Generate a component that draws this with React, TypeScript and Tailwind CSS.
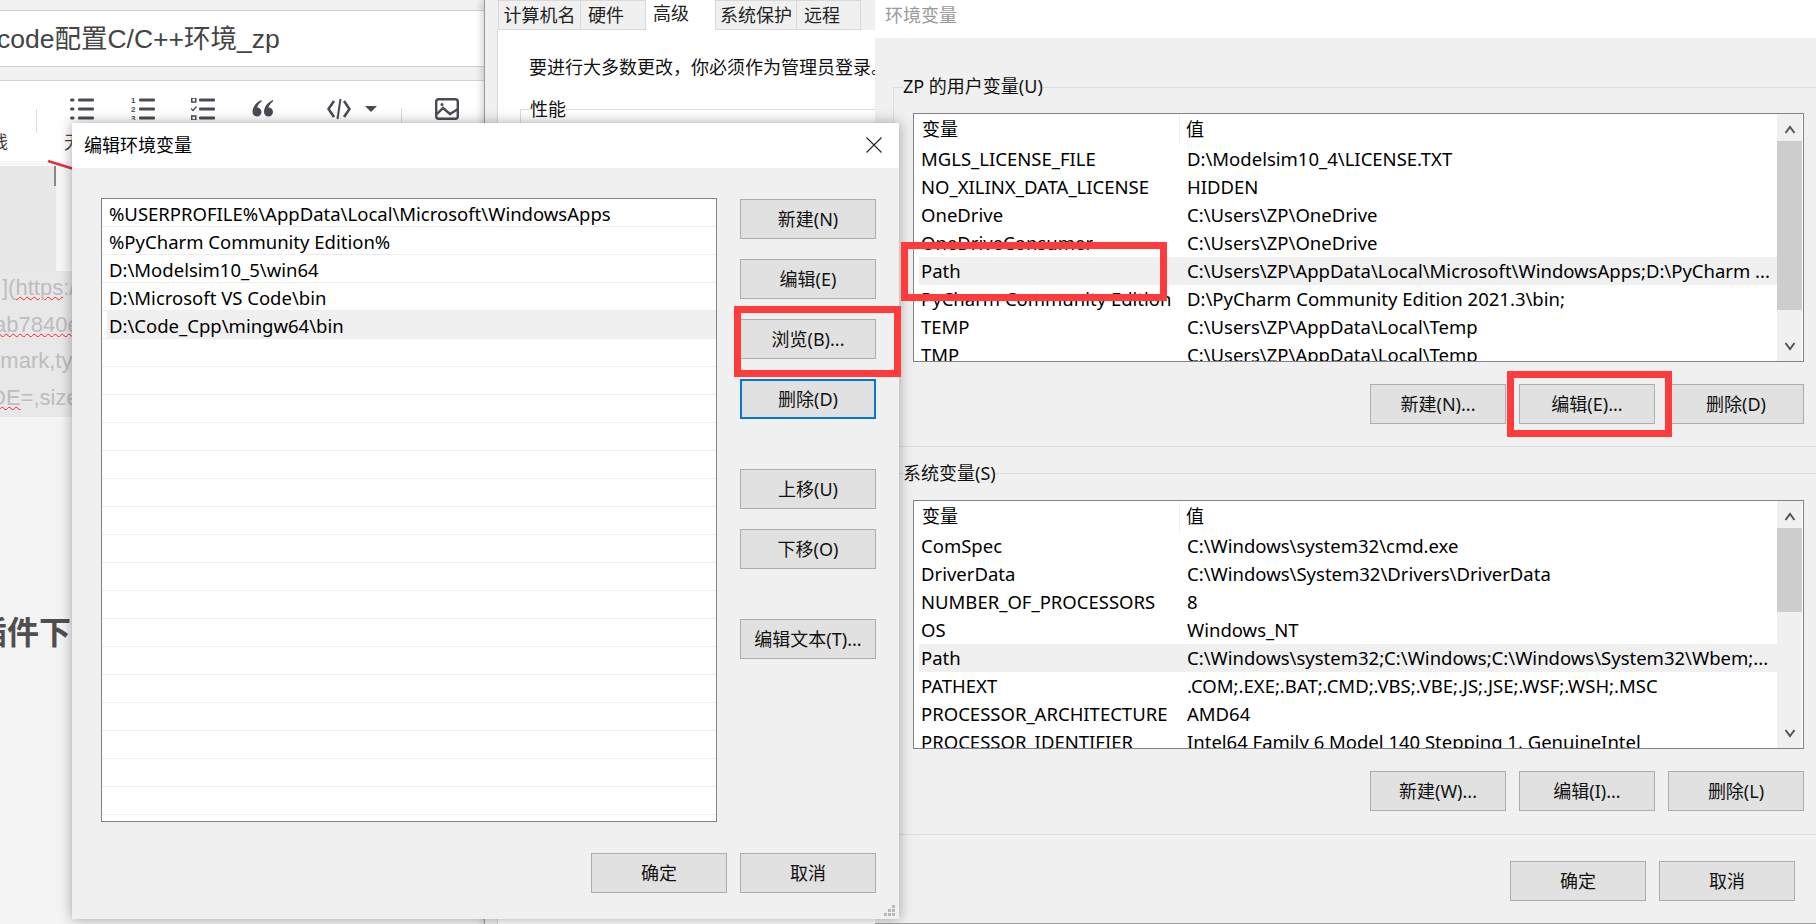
import { ReactNode } from "react";

const FONT = "font-['Noto_Sans','Noto_Sans_CJK_SC',sans-serif]";

const userVars = [
  ["MGLS_LICENSE_FILE", "D:\\Modelsim10_4\\LICENSE.TXT"],
  ["NO_XILINX_DATA_LICENSE", "HIDDEN"],
  ["OneDrive", "C:\\Users\\ZP\\OneDrive"],
  ["OneDriveConsumer", "C:\\Users\\ZP\\OneDrive"],
  ["Path", "C:\\Users\\ZP\\AppData\\Local\\Microsoft\\WindowsApps;D:\\PyCharm ..."],
  ["PyCharm Community Edition", "D:\\PyCharm Community Edition 2021.3\\bin;"],
  ["TEMP", "C:\\Users\\ZP\\AppData\\Local\\Temp"],
  ["TMP", "C:\\Users\\ZP\\AppData\\Local\\Temp"],
];

const systemVars = [
  ["ComSpec", "C:\\Windows\\system32\\cmd.exe"],
  ["DriverData", "C:\\Windows\\System32\\Drivers\\DriverData"],
  ["NUMBER_OF_PROCESSORS", "8"],
  ["OS", "Windows_NT"],
  ["Path", "C:\\Windows\\system32;C:\\Windows;C:\\Windows\\System32\\Wbem;..."],
  ["PATHEXT", ".COM;.EXE;.BAT;.CMD;.VBS;.VBE;.JS;.JSE;.WSF;.WSH;.MSC"],
  ["PROCESSOR_ARCHITECTURE", "AMD64"],
  ["PROCESSOR_IDENTIFIER", "Intel64 Family 6 Model 140 Stepping 1, GenuineIntel"],
];

const pathRows = [
  "%USERPROFILE%\\AppData\\Local\\Microsoft\\WindowsApps",
  "%PyCharm Community Edition%",
  "D:\\Modelsim10_5\\win64",
  "D:\\Microsoft VS Code\\bin",
  "D:\\Code_Cpp\\mingw64\\bin",
  ...Array(17).fill(""),
];

function WinButton({ children, focused }: { children: ReactNode; focused?: boolean }) {
  return (
    <div
      className={`w-[136px] h-10 flex items-center justify-center bg-[#e1e1e1] text-[18px] text-[#111] ${
        focused ? "border-2 border-[#0078d7]" : "border border-[#adadad]"
      }`}
    >
      {children}
    </div>
  );
}

function ListIcon({ kind }: { kind: "bullet" | "number" | "task" }) {
  return (
    <svg width="24" height="22" viewBox="0 0 24 22" className="shrink-0">
      {[2, 11, 20].map((y, i) => (
        <g key={y}>
          <rect x="8" y={y - 1.5} width="16" height="3" rx="1" fill="#4a4a55" />
          {kind === "bullet" && <rect x="0" y={y - 1.5} width="4.5" height="3" rx="1.5" fill="#4a4a55" />}
          {kind === "number" && (
            <text x="0" y={y + 3} fontSize="8" fontWeight="700" fill="#4a4a55" fontFamily="Liberation Sans">
              {i + 1}
            </text>
          )}
          {kind === "task" && i !== 1 && (
            <rect x="0.75" y={y - 2} width="4" height="4" fill="none" stroke="#4a4a55" strokeWidth="1.5" />
          )}
          {kind === "task" && i === 1 && <path d="M0 10.5l2 2 3.5-4" fill="none" stroke="#4a4a55" strokeWidth="1.3" />}
        </g>
      ))}
    </svg>
  );
}

function BlogEditor() {
  return (
    <div className="absolute left-0 top-0 w-[485px] h-[924px] bg-[#f4f4f4] overflow-hidden font-['Liberation_Sans','Noto_Sans_CJK_SC',sans-serif]">
      <div className="h-[10px] bg-[#f1f1f1]" />
      <div className="h-[57px] bg-white border-y border-[#cfcfcf] flex items-center pt-[3px]">
        <span className="text-[26.5px] text-[#444] -ml-[3px]">code配置C/C++环境_zp</span>
      </div>
      <div className="h-[13px] bg-[#f1f1f1]" />
      <div className="relative h-[81px] bg-white border-t border-[#d4d4d4]">
        <div className="absolute left-[70px] top-[17px] h-[22px] flex items-center">
          <ListIcon kind="bullet" />
          <div className="ml-[37px]"><ListIcon kind="number" /></div>
          <div className="ml-[36px]"><ListIcon kind="task" /></div>
          <svg width="22" height="20" viewBox="0 0 22 20" className="ml-[37px]">
            <path d="M9.5 1C5 3 0.5 7 0.5 13a4.5 4.5 0 1 0 4.5-4.5C6 5.5 8 3.5 9.5 2.5zM21 1c-4.5 2-9 6-9 12a4.5 4.5 0 1 0 4.5-4.5c1-3 3-5 4.5-6z" fill="#4a4a55" />
          </svg>
          <svg width="24" height="22" viewBox="0 0 24 22" fill="none" stroke="#4a4a55" strokeWidth="2.6" className="ml-[53px]">
            <path d="M7 3 1.5 11 7 19M17 3l5.5 8L17 19" />
            <path d="M13.5 1 10.5 21" strokeWidth="2" />
          </svg>
          <div className="ml-[14px] w-0 h-0 border-x-[6px] border-x-transparent border-t-[6px] border-t-[#4a4a55]" />
          <div className="ml-[24px] w-px h-[24px] bg-[#ddd] mt-[22px]" />
          <svg width="24" height="22" viewBox="0 0 24 22" fill="none" stroke="#4a4a55" strokeWidth="2.4" className="ml-[33px]">
            <rect x="1.2" y="1.2" width="21.6" height="19.6" rx="2.5" />
            <path d="M2 16 8 10l7 6 8-5" />
            <circle cx="7" cy="6.5" r="1.5" fill="#4a4a55" stroke="none" />
          </svg>
        </div>
        <div className="absolute left-[36px] top-[28px] w-px h-[24px] bg-[#ddd]" />
        <span className="absolute -left-[10px] top-[49px] text-[18px] text-[#444]">线</span>
        <span className="absolute left-[64px] top-[49px] text-[18px] text-[#444]">无</span>
      </div>
      <div className="relative h-[110px] flex bg-[#f7f7f7]">
        <div className="w-[56px] bg-[#e7e7e7] mt-[5px]" />
        <div className="absolute left-[54px] top-[5px] w-[1.5px] h-[20px] bg-[#888]" />
        <svg width="30" height="12" viewBox="0 0 30 12" fill="none" stroke="#e0313a" strokeWidth="2.5" className="absolute left-[46px] -top-[1px]">
          <path d="M2 1 28 9" />
        </svg>
      </div>
      <div className="w-[72px] h-[146px] bg-[#e8e8e8] overflow-hidden text-[22px] leading-[36.5px] text-[#bdbdbd] whitespace-nowrap">
        <div className="ml-[2px] -mt-[1px]">](<span className="underline decoration-wavy decoration-[#f22] decoration-1">https</span>:/</div>
        <div className="-ml-[6px]"><span className="underline decoration-wavy decoration-[#f22] decoration-1">ab7840e</span></div>
        <div className="-ml-[7px]">rmark,ty</div>
        <div className="-ml-[10px]"><span className="underline decoration-wavy decoration-[#f22] decoration-1">DE</span>=,size</div>
      </div>
      <div className="mt-[192px] text-[32px] font-bold text-[#4f4f4f] -ml-[25px] whitespace-nowrap">插件下载</div>
    </div>
  );
}

function SystemProps() {
  return (
    <div className={`absolute left-[484px] top-0 w-[391px] h-[924px] bg-[#f0f0f0] border-l border-[#9a9a9a] shadow-[-3px_0_6px_rgba(0,0,0,0.15)] ${FONT}`}>
      <div className="flex h-[30px] pl-[13px] pr-[2px] text-[18px] text-[#222]">
        <div className="w-[83px] border border-[#d9d9d9] bg-[#f0f0f0] flex items-center justify-center pt-[1px]">计算机名</div>
        <div className="w-[65px] border border-l-0 border-[#d9d9d9] bg-[#f0f0f0] flex items-center pl-[7px] pt-[1px]">硬件</div>
        <div className="w-[69px] bg-white pb-[3px] flex items-center pl-[7px]">高级</div>
        <div className="w-[82px] border border-[#d9d9d9] bg-[#f0f0f0] flex items-center justify-center pt-[1px]">系统保护</div>
        <div className="w-[64px] border border-l-0 border-[#d9d9d9] bg-[#f0f0f0] flex items-center pl-[7px] pt-[1px]">远程</div>
      </div>
      <div className="ml-[12px] h-[894px] bg-white border-l border-[#d9d9d9] pt-[25px] pl-[31px] overflow-hidden">
        <div className="text-[18px] text-[#111] whitespace-nowrap leading-[24px]">要进行大多数更改，你必须作为管理员登录。</div>
        <div className="relative mt-[30px] -ml-[9px] h-[60px] border-t border-l border-[#dcdcdc]">
          <span className="absolute left-[9px] -top-[13px] bg-white text-[18px] text-[#111] leading-[24px]">性能</span>
        </div>
      </div>
    </div>
  );
}

function PathDialog() {
  return (
    <div className={`absolute left-[72px] top-[123px] w-[827px] h-[796px] flex flex-col bg-[#f0f0f0] shadow-[0_0_12px_rgba(0,0,0,0.35)] ${FONT}`}>
      <div className="relative h-[45px] shrink-0 bg-white flex items-center pl-[12px] text-[18px] text-black">
        编辑环境变量
        <svg width="16" height="16" viewBox="0 0 16 16" fill="none" stroke="#222" strokeWidth="1.1" className="absolute right-[17px] top-[14px]">
          <path d="M0.5 0.5 15.5 15.5M15.5 0.5 0.5 15.5" />
        </svg>
      </div>
      <div className="relative flex-1 flex pl-[29px] pt-[30px]">
        <div className="w-[616px] h-[624px] bg-white border border-[#82828c] overflow-hidden">
          {pathRows.map((r, i) => (
            <div key={i} className="h-[28px] pl-[5px] border-b border-[#eeeeee]">
              <div className={`h-full pl-[2px] pt-[2px] flex items-center text-[18.5px] text-black whitespace-nowrap ${i === 4 ? "bg-[#f0f0f0]" : ""}`}>{r}</div>
            </div>
          ))}
        </div>
        <div className="ml-[23px] flex flex-col pt-[1px]">
          <WinButton>新建(N)</WinButton>
          <div className="mt-5"><WinButton>编辑(E)</WinButton></div>
          <div className="mt-5"><WinButton>浏览(B)...</WinButton></div>
          <div className="mt-5"><WinButton focused>删除(D)</WinButton></div>
          <div className="mt-[50px]"><WinButton>上移(U)</WinButton></div>
          <div className="mt-5"><WinButton>下移(O)</WinButton></div>
          <div className="mt-[50px]"><WinButton>编辑文本(T)...</WinButton></div>
        </div>
        <div className="absolute left-[519px] top-[685px] flex gap-[13px]">
          <WinButton>确定</WinButton>
          <WinButton>取消</WinButton>
        </div>
        <div className="absolute right-[4px] bottom-[3px] grid grid-cols-3 gap-[1px] w-[11px]">
          {[0, 0, 1, 0, 1, 1, 1, 1, 1].map((v, i) => (
            <div key={i} className={`w-[3px] h-[3px] ${v ? "bg-[#b8b8b8]" : ""}`} />
          ))}
        </div>
      </div>
    </div>
  );
}

function VarList({ rows }: { rows: string[][] }) {
  return (
    <div className="relative ml-[20px] w-[891px] h-[249px] bg-white border border-[#82828c] overflow-hidden">
      <div className="flex h-[31px] pr-[27px] text-[18px] text-black">
        <div className="w-[266px] pl-[8px] border-r border-[#eeeeee] flex items-center">变量</div>
        <div className="pl-[6px] flex items-center">值</div>
      </div>
      {rows.map(([k, v], i) => (
        <div key={k} className={`flex h-[28px] ml-[5px] mr-[26px] items-center text-[18.5px] text-black whitespace-nowrap overflow-hidden ${i === 4 ? "bg-[#f0f0f0]" : ""}`}>
          <div className="w-[261px] shrink-0 pl-[2px] overflow-hidden">{k}</div>
          <div className="pl-[7px]">{v}</div>
        </div>
      ))}
      <div className="absolute right-[1px] top-0 bottom-0 w-[25px] bg-[#f0f0f0] flex flex-col items-center">
        <svg width="12" height="10" viewBox="0 0 12 10" fill="none" stroke="#555" strokeWidth="2" className="mt-[11px]">
          <path d="M1.5 8 6 2l4.5 6" />
        </svg>
        <div className={`w-full mt-[6px] bg-[#cdcdcd] ${rows === userVars ? "h-[169px]" : "h-[84px]"}`} />
        <svg width="12" height="10" viewBox="0 0 12 10" fill="none" stroke="#555" strokeWidth="2" className="absolute bottom-[10px]">
          <path d="M1.5 2 6 8l4.5-6" />
        </svg>
      </div>
    </div>
  );
}

function EnvWindow() {
  return (
    <div className={`absolute left-[875px] top-0 w-[941px] h-[924px] flex flex-col bg-[#f0f0f0] border-b border-[#a0a0a0] ${FONT}`}>
      <div className="h-[38px] shrink-0 bg-white pl-[10px] pb-[7px] flex items-center text-[18px] text-[#999]">环境变量</div>
      <div className="relative h-[409px] shrink-0 border-b border-[#dddddd]">
        <div className="relative h-[75px] ml-[18px] border-t border-l border-[#dddddd] mt-[49px]">
          <span className="absolute left-[9px] -top-[14px] bg-[#f0f0f0] text-[18px] text-[#111] leading-[24px]">ZP 的用户变量(U)</span>
        </div>
        <div className="absolute left-[18px] top-[75px]">
          <VarList rows={userVars} />
        </div>
        <div className="absolute left-[495px] top-[346px] flex gap-[13px]">
          <WinButton>新建(N)...</WinButton>
          <WinButton>编辑(E)...</WinButton>
          <WinButton>删除(D)</WinButton>
        </div>
      </div>
      <div className="relative flex-1">
        <div className="absolute left-[18px] right-0 top-[26px] border-t border-[#dddddd]" />
        <span className="absolute left-[28px] top-[14px] bg-[#f0f0f0] text-[18px] text-[#111] leading-[24px]">系统变量(S)</span>
        <div className="absolute left-[18px] top-[53px]">
          <VarList rows={systemVars} />
        </div>
        <div className="absolute left-[495px] top-[324px] flex gap-[13px]">
          <WinButton>新建(W)...</WinButton>
          <WinButton>编辑(I)...</WinButton>
          <WinButton>删除(L)</WinButton>
        </div>
        <div className="absolute left-0 right-0 top-[387px] border-t border-[#dddddd]" />
        <div className="absolute left-[635px] top-[414px] flex gap-[13px]">
          <WinButton>确定</WinButton>
          <WinButton>取消</WinButton>
        </div>
      </div>
    </div>
  );
}

export default function App() {
  return (
    <div className="relative w-[1816px] h-[924px] overflow-hidden bg-[#f0f0f0]">
      <BlogEditor />
      <SystemProps />
      <EnvWindow />
      <PathDialog />
      {/* red annotation boxes */}
      <div className="absolute left-[901px] top-[242px] w-[266px] h-[59px] border-[7px] border-[#ff3b3b]" />
      <div className="absolute left-[1507px] top-[371px] w-[165px] h-[66px] border-[7px] border-[#ff3b3b]" />
      <div className="absolute left-[734px] top-[306px] w-[167px] h-[71px] border-[7px] border-[#ff3b3b]" />
    </div>
  );
}
